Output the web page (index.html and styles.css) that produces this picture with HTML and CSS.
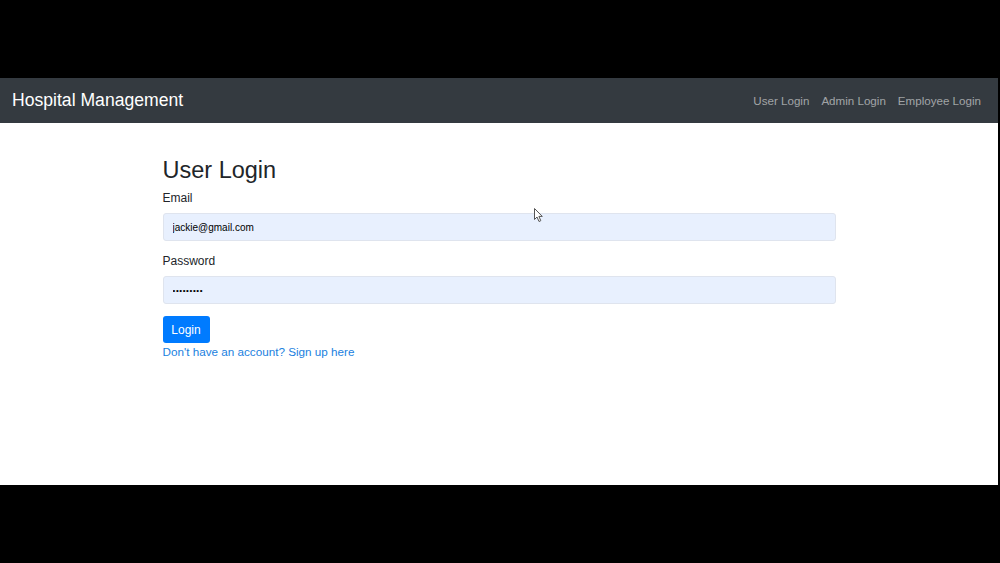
FILE: index.html
```html
<html>
    <head>
        <link rel="stylesheet" href="styles.css">
    </head>
    <body>
        <div class="screen">
          <nav class="navbar">
            <a class="brand" href="#">Hospital Management</a>
            <div class="nav-links">
              <a href="#">User Login</a>
              <a href="#">Admin Login</a>
              <a href="#">Employee Login</a>
            </div>
          </nav>
          <div class="container">
            <h2>User Login</h2>
            <form>
              <div class="form-group">
                <label for="email">Email</label>
                <input type="text" id="email" value="jackie@gmail.com">
              </div>
              <div class="form-group">
                <label for="password">Password</label>
                <input type="password" id="password" value="jackie123">
              </div>
              <button type="button" class="btn">Login</button>
            </form>
            <a class="signup" href="#">Don't have an account? Sign up here</a>
            <svg class="cursor" width="10" height="15" viewBox="0 0 10 15">
              <path d="M0.5 0.5 L0.5 11.5 L3 9 L5 13.5 L6.8 12.7 L4.9 8.4 L8.3 8.4 Z" fill="#fff" stroke="#555" stroke-width="1"/>
            </svg>
          </div>
        </div>
    </body>
</html>
```

FILE: styles.css
```css
html, body {padding: 0; margin: 0}
body {
  background: #000;
  font-family: "Liberation Sans", Arial, sans-serif;
  height: 563px;
  overflow: hidden;
}
.screen {
  margin-top: 78px;
  width: 998px;
  height: 407px;
  background: #fff;
}
.navbar {
  height: 45px;
  background: #343a40;
  display: flex;
  align-items: center;
  justify-content: space-between;
  padding: 0 17px 0 12px;
}
.brand {
  color: #fff;
  font-size: 17.6px;
  text-decoration: none;
}
.nav-links {
  display: flex;
  gap: 12px;
}
.nav-links a {
  color: rgba(255, 255, 255, 0.55);
  font-size: 11.6px;
  text-decoration: none;
}
.container {
  width: 673px;
  margin: 0 auto;
  padding-top: 33px;
  position: relative;
}
h2 {
  font-size: 23.5px;
  font-weight: 400;
  color: #212529;
  margin: 0 0 7px 0;
  line-height: 28px;
}
form {margin: 0}
.form-group {
  margin-bottom: 13px;
}
.form-group:last-of-type {
  margin-bottom: 12px;
}
label {
  display: block;
  font-size: 12px;
  color: #212529;
  margin-bottom: 8px;
}
input {
  display: block;
  width: 100%;
  box-sizing: border-box;
  height: 28px;
  padding: 0 9px;
  border: 1px solid #dfe4ee;
  border-radius: 3px;
  background: #e8f0fe;
  font-family: inherit;
  font-size: 10px;
  color: #000;
}
input[type=password] {
  font-size: 8px;
  letter-spacing: 0.6px;
}
.btn {
  display: block;
  background: #007bff;
  color: #fff;
  border: none;
  border-radius: 3px;
  width: 47px;
  height: 27px;
  font-family: inherit;
  font-size: 12px;
  padding: 0;
}
.signup {
  display: inline-block;
  color: #1a7fe0;
  font-size: 11.7px;
  text-decoration: none;
  margin-top: 2px;
}
.cursor {
  position: absolute;
  left: 371px;
  top: 85px;
}
```
